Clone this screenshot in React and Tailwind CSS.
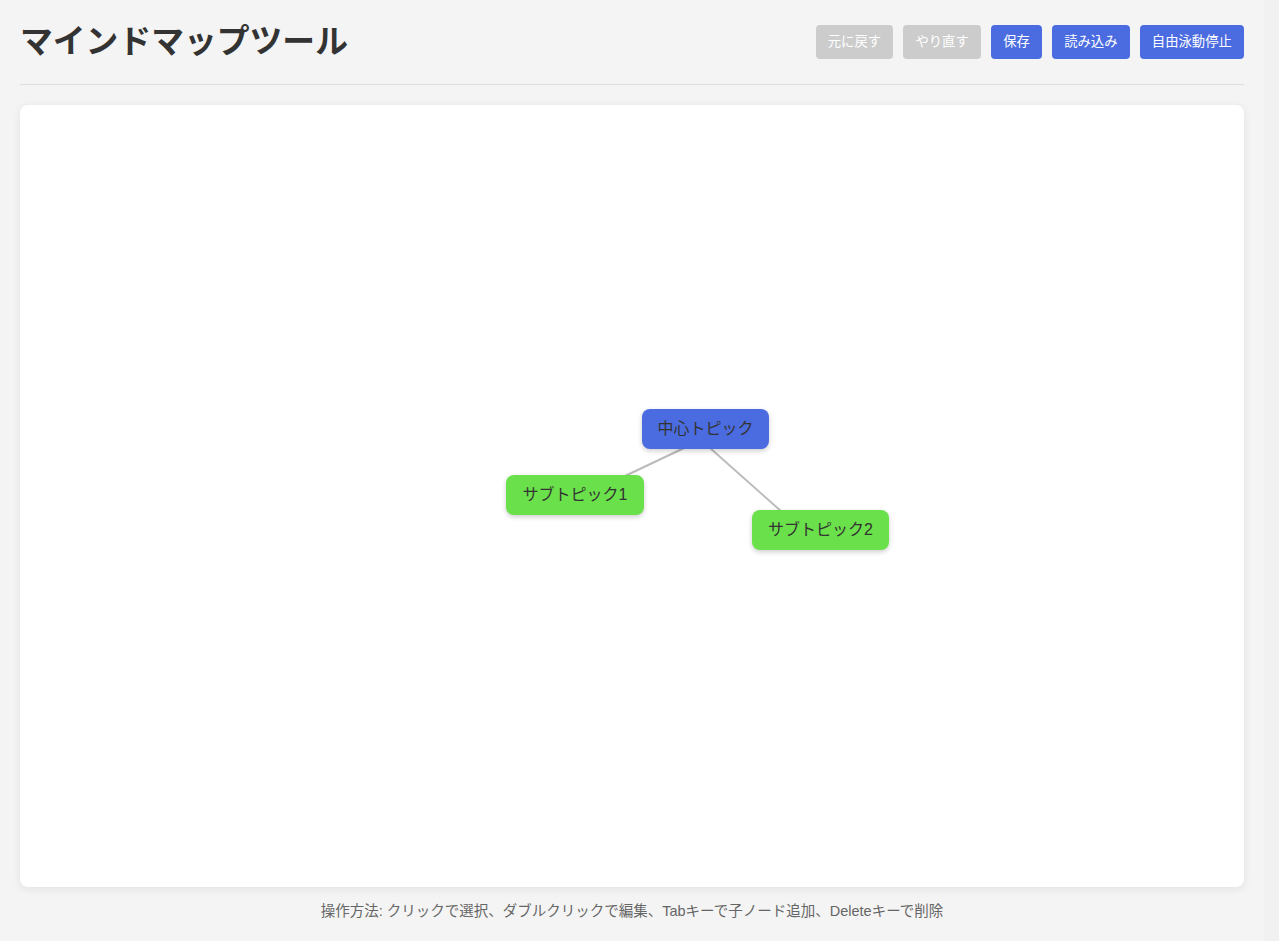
import React from 'react';

const nodes = [
  { id: 'root', label: '中心トピック', x: 622, y: 304, w: 127, color: 'bg-[#4a6ce0]' },
  { id: 'sub1', label: 'サブトピック1', x: 486, y: 370, w: 138, color: 'bg-[#6ae04a]' },
  { id: 'sub2', label: 'サブトピック2', x: 732, y: 405, w: 137, color: 'bg-[#6ae04a]' },
];

const links = [
  { from: [681, 335], to: [586, 380] },
  { from: [681, 335], to: [771, 415] },
];

const App = () => {
  return (
    <div
      className="min-h-screen w-full bg-[#f1f1f1] text-[#333]"
      style={{ fontFamily: '"Liberation Sans", "Noto Sans CJK JP", sans-serif' }}
    >
      <div className="w-[1264px] bg-[#f4f4f4] p-5 pb-0">
        <header className="flex items-center justify-between pb-5 mb-5 border-b border-[#dddddd]">
          <h1 className="text-[32.8px] leading-[44px] font-bold text-[#333]">マインドマップツール</h1>
          <div className="flex gap-[10px]">
            <button className="h-[34px] px-[12.2px] rounded bg-[#cccccc] text-white text-[13.3333px]">元に戻す</button>
            <button className="h-[34px] px-[12.2px] rounded bg-[#cccccc] text-white text-[13.3333px]">やり直す</button>
            <button className="h-[34px] px-[12.2px] rounded bg-[#4a6ce0] text-white text-[13.3333px]">保存</button>
            <button className="h-[34px] px-[12.2px] rounded bg-[#4a6ce0] text-white text-[13.3333px]">読み込み</button>
            <button className="h-[34px] px-[12.2px] rounded bg-[#4a6ce0] text-white text-[13.3333px]">自由泳動停止</button>
          </div>
        </header>

        <div className="relative h-[782px] bg-white rounded-lg shadow-[0_2px_10px_rgba(0,0,0,0.08)]">
          <svg className="absolute inset-0 w-full h-full">
            {links.map((l, i) => (
              <line key={i} x1={l.from[0]} y1={l.from[1]} x2={l.to[0]} y2={l.to[1]} stroke="#bbbbbb" strokeWidth="2" />
            ))}
          </svg>
          {nodes.map((n) => (
            <div
              key={n.id}
              className={`absolute ${n.color} py-[10px] rounded-lg text-base leading-5 text-center text-[#333] whitespace-nowrap shadow-[0_2px_5px_rgba(0,0,0,0.2)]`}
              style={{ left: n.x, top: n.y, width: n.w }}
            >
              {n.label}
            </div>
          ))}
        </div>

        <p className="mt-[14px] pb-5 text-center text-[14.5px] leading-5 text-[#666]">
          操作方法: クリックで選択、ダブルクリックで編集、Tabキーで子ノード追加、Deleteキーで削除
        </p>
      </div>
    </div>
  );
};

export default App;
